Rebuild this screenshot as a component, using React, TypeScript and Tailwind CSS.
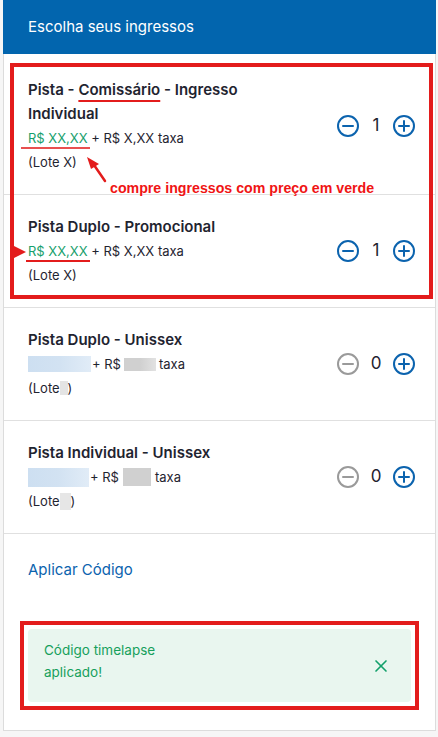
import { X } from "lucide-react";

const font = { fontFamily: "Inter, 'Noto Sans', sans-serif" };

function MinusIcon({ active }: { active: boolean }) {
  return (
    <svg width="24" height="24" viewBox="0 0 24 24" fill="none" stroke={active ? "#0b63ae" : "#9a9a9a"} strokeWidth="2" strokeLinecap="round">
      <circle cx="12" cy="12" r="10" />
      <path d="M7 12h10" />
    </svg>
  );
}

function PlusIcon() {
  return (
    <svg width="24" height="24" viewBox="0 0 24 24" fill="none" stroke="#0b63ae" strokeWidth="2" strokeLinecap="round">
      <circle cx="12" cy="12" r="10" />
      <path d="M7 12h10M12 7v10" />
    </svg>
  );
}

function Counter({ value }: { value: number }) {
  const active = value > 0;
  return (
    <div className="flex items-center">
      <MinusIcon active={active} />
      <span className="w-8 text-center text-[17px] text-[#1f2430]">{value}</span>
      <PlusIcon />
    </div>
  );
}

function Mark({ className }: { className: string }) {
  return <span className={"inline-block align-middle " + className} />;
}

export default function App() {
  return (
    <div className="min-h-screen bg-[#f6f6f6] pl-[3px]" style={font}>
      <div className="w-[433px] border border-[#dcdcdc] bg-white text-[#1f2430]">
        <div className="-mx-px -mt-px flex h-[54px] items-center bg-[#0265ae] px-[25px] text-[15px] font-normal text-white">
          Escolha seus ingressos
        </div>

        <div className="relative">
          <div className="flex items-center justify-between border-b border-[#e0e0e0] pb-5 pl-6 pr-[19px] pt-6">
            <div className="w-[250px]">
              <div className="text-[15px] font-semibold leading-6">
                Pista -{" "}
                <span className="underline decoration-[#e31c1c] decoration-[1.5px] underline-offset-[5px]">Comissário</span>{" "}
                - Ingresso Individual
              </div>
              <div className="text-[13px] leading-6">
                <span className="relative text-[#17a06c]">
                  R$ XX,XX
                  <span className="absolute -left-[7px] right-[-2px] bottom-[-3px] h-[2px] bg-[#e8504f]" />
                </span>{" "}
                + R$ X,XX taxa
              </div>
              <div className="text-[13px] leading-6">(Lote X)</div>
            </div>
            <Counter value={1} />
          </div>

          <div className="flex items-center justify-between border-b border-[#e0e0e0] py-5 pl-6 pr-[19px]">
            <div className="w-[250px]">
              <div className="text-[15px] font-semibold leading-6">Pista Duplo - Promocional</div>
              <div className="text-[13px] leading-6">
                <span className="relative text-[#17a06c]">
                  R$ XX,XX
                  <span className="absolute -left-[2px] right-[-2px] bottom-[-3px] h-[2px] bg-[#e31c1c]" />
                </span>{" "}
                + R$ X,XX taxa
              </div>
              <div className="text-[13px] leading-6">(Lote X)</div>
            </div>
            <Counter value={1} />
          </div>

          <div className="pointer-events-none absolute bottom-[9px] left-[6px] right-[2px] top-[9px] border-4 border-[#e31c1c]" />
          <div
            className="absolute left-[106px] top-[124px] text-[14.2px] font-bold leading-5 text-[#f01414]"
            style={{ fontFamily: "'Liberation Sans', Arial, sans-serif" }}
          >
            compre ingressos com preço em verde
          </div>
          <svg className="absolute left-[78px] top-[100px]" width="30" height="32" viewBox="0 0 30 32">
            <path d="M23 27 L12 11" stroke="#e31c1c" strokeWidth="2.5" strokeLinecap="round" />
            <path d="M5 3 L17 10 L9 15 Z" fill="#e31c1c" />
          </svg>
          <svg className="absolute left-[6px] top-[190px]" width="16" height="16" viewBox="0 0 16 16">
            <path d="M0 0 L16 8 L0 16 Z" fill="#e31c1c" />
          </svg>
        </div>

        <div className="flex items-center justify-between border-b border-[#e0e0e0] py-5 pl-6 pr-[19px]">
          <div className="w-[250px]">
            <div className="text-[15px] font-semibold leading-6">Pista Duplo - Unissex</div>
            <div className="flex items-center text-[13px] leading-6">
              <Mark className="h-4 w-[63px] bg-gradient-to-r from-[#cddff1] via-[#d2e2f2] to-[#e1ecf7]" />
              <span className="ml-px">+ R$</span>
              <Mark className="ml-[3px] h-[13px] w-[32px] bg-gradient-to-r from-[#d0d0d0] via-[#d0d0d0] to-[#e2e2e2]" />
              <span className="ml-[3px]">taxa</span>
            </div>
            <div className="flex items-center text-[13px] leading-6">
              (Lote
              <Mark className="h-[14px] w-[8px] bg-[#e4e4e4]" />)
            </div>
          </div>
          <Counter value={0} />
        </div>

        <div className="flex items-center justify-between border-b border-[#e0e0e0] py-5 pl-6 pr-[19px]">
          <div className="w-[250px]">
            <div className="text-[15px] font-semibold leading-6">Pista Individual - Unissex</div>
            <div className="flex items-center text-[13px] leading-6">
              <Mark className="h-[19px] w-[61px] bg-gradient-to-r from-[#cddff1] via-[#d2e2f2] to-[#e1ecf7]" />
              <span className="ml-px">+ R$</span>
              <Mark className="ml-[4px] h-[18px] w-[28px] bg-[#d0d0d0]" />
              <span className="ml-[4px]">taxa</span>
            </div>
            <div className="flex items-center text-[13px] leading-6">
              (Lote
              <Mark className="h-[17px] w-[11px] bg-[#e6e6e6]" />)
            </div>
          </div>
          <Counter value={0} />
        </div>

        <div className="px-6 pb-7 pt-[24px]">
          <div className="text-[15px] leading-6 text-[#0b63ae]">Aplicar Código</div>
          <div className="relative mt-[47px]">
            <div className="flex items-center justify-between rounded bg-[#e9f6ef] py-[10px] pl-4 pr-[20px] text-[13.5px] leading-[22px] text-[#17a05c]">
              <div className="pb-[9px]">
                Código timelapse
                <br />
                aplicado!
              </div>
              <X size={20} strokeWidth={2} color="#13a06b" />
            </div>
            <div className="pointer-events-none absolute -inset-2 border-4 border-[#e31c1c]" />
          </div>
        </div>
      </div>
    </div>
  );
}
